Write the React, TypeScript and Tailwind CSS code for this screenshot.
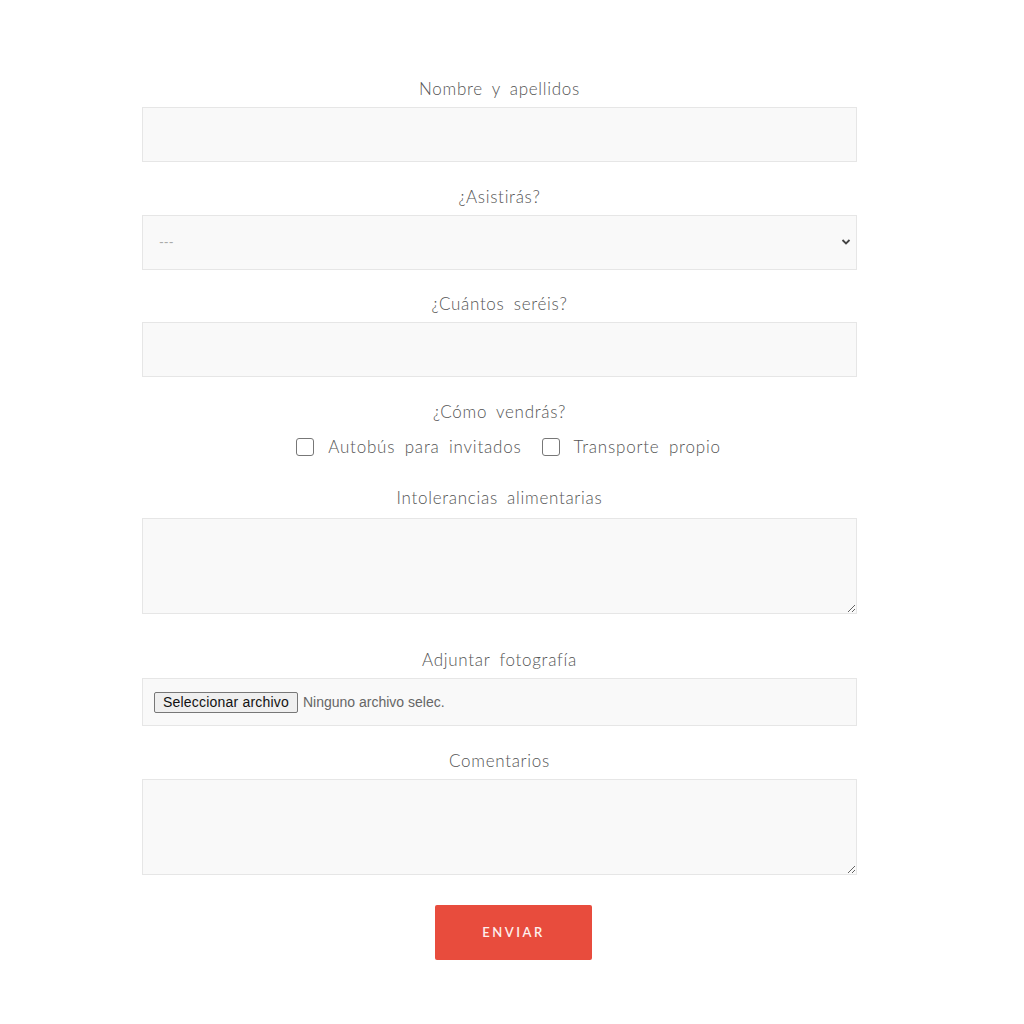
import React from "react";

const labelCls =
  "block text-center text-[17px] leading-[20px] text-[#555] font-light [word-spacing:4px] tracking-[0.7px]";
const boxCls =
  "w-full bg-[#f9f9f9] border border-[#e6e6e6] outline-none";

export default function App() {
  return (
    <div
      className="min-h-[1024px] w-[1024px] bg-white"
      style={{ fontFamily: "Lato, 'Noto Sans', sans-serif" }}
    >
      <form className="ml-[142px] w-[715px] pt-[79px] flex flex-col">
        <label className={labelCls}>Nombre y apellidos</label>
        <input type="text" className={`${boxCls} h-[55px] mt-[8px]`} />

        <label className={`${labelCls} mt-[25px]`}>¿Asistirás?</label>
        <div className="relative mt-[8px]">
          <div className={`${boxCls} h-[55px] flex items-center pl-[16px] text-[13px] text-[#aaa]`}>
            ---
          </div>
          <svg
            className="absolute right-[6px] top-[23px]"
            width="10"
            height="8"
            viewBox="0 0 10 8"
          >
            <path d="M1.5 2 L5 5.5 L8.5 2" stroke="#444" strokeWidth="1.8" fill="none" />
          </svg>
        </div>

        <label className={`${labelCls} mt-[24px]`}>¿Cuántos seréis?</label>
        <input type="text" className={`${boxCls} h-[55px] mt-[8px]`} />

        <label className={`${labelCls} mt-[25px]`}>¿Cómo vendrás?</label>
        <div className="flex justify-center items-center mt-[15px] text-[17px] leading-[20px] text-[#555] font-light [word-spacing:4px] tracking-[0.8px] pl-[18px]">
          <span className="w-[18px] h-[18px] border border-[#777] rounded-[3px] mr-[14px]" />
          <span>Autobús para invitados</span>
          <span className="w-[18px] h-[18px] border border-[#777] rounded-[3px] ml-[20px] mr-[14px]" />
          <span>Transporte propio</span>
        </div>

        <label className={`${labelCls} mt-[31px]`}>Intolerancias alimentarias</label>
        <textarea className={`${boxCls} h-[96px] mt-[10px] block`} />

        <label className={`${labelCls} mt-[36px]`}>Adjuntar fotografía</label>
        <div className={`${boxCls} h-[48px] mt-[8px] flex items-center pl-[11px]`}>
          <span
            className="h-[21px] px-[8px] flex items-center border border-[#777] rounded-[2px] bg-[#efefef] text-[14px] tracking-[0.2px] text-[#111]"
            style={{ fontFamily: "'Liberation Sans', Arial, sans-serif" }}
          >
            Seleccionar archivo
          </span>
          <span
            className="ml-[5px] text-[14px] text-[#666]"
            style={{ fontFamily: "'Liberation Sans', Arial, sans-serif" }}
          >
            Ninguno archivo selec.
          </span>
        </div>

        <label className={`${labelCls} mt-[25px]`}>Comentarios</label>
        <textarea className={`${boxCls} h-[96px] mt-[8px] block`} />

        <div className="flex justify-center mt-[30px] pl-[28px]">
          <button
            type="button"
            className="w-[157px] h-[55px] bg-[#e84c3d] rounded-[2px] text-[#fdf0ee] text-[13px] tracking-[2.5px] font-semibold"
          >
            ENVIAR
          </button>
        </div>
      </form>
    </div>
  );
}
